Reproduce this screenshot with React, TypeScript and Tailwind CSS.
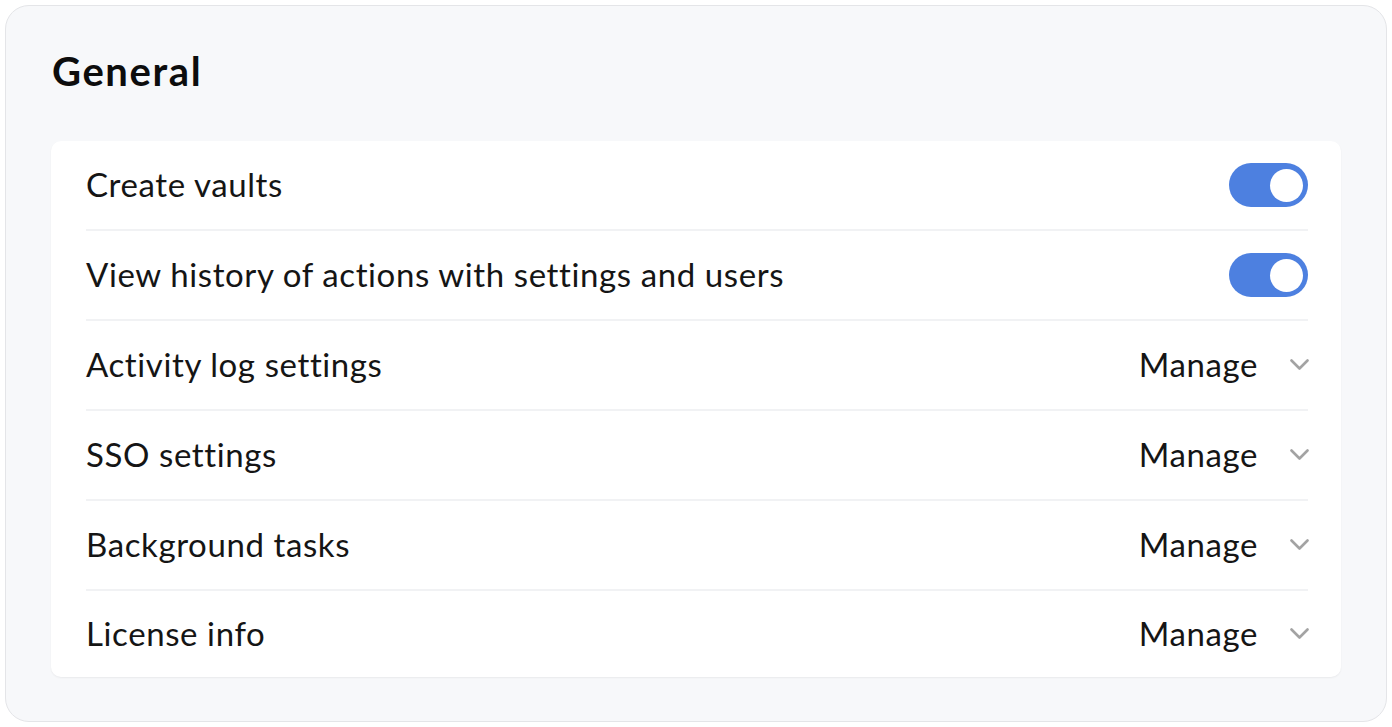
type Row = { label: string; kind: "toggle" | "manage"; h: string };

const rows: Row[] = [
  { label: "Create vaults", kind: "toggle", h: "h-[90px]" },
  { label: "View history of actions with settings and users", kind: "toggle", h: "h-[90px]" },
  { label: "Activity log settings", kind: "manage", h: "h-[90px]" },
  { label: "SSO settings", kind: "manage", h: "h-[90px]" },
  { label: "Background tasks", kind: "manage", h: "h-[90px]" },
  { label: "License info", kind: "manage", h: "h-[86px]" },
];

function Toggle() {
  return (
    <div className="flex h-[44px] w-[79px] items-center justify-end rounded-full bg-[#4d80e0] pr-[5px]">
      <div className="h-[33px] w-[33px] rounded-full bg-white" />
    </div>
  );
}

function Chevron() {
  return (
    <svg width="19" height="12" viewBox="0 0 19 12" fill="none" className="mr-[-1px]">
      <polyline
        points="1.5,1.5 9.5,9.5 17.5,1.5"
        stroke="#a3a3a3"
        strokeWidth="2.6"
        strokeLinecap="round"
        strokeLinejoin="round"
      />
    </svg>
  );
}

export default function App() {
  return (
    <div className="h-[727px] w-[1392px] bg-white p-[5px] font-['Lato',sans-serif] text-[#151515]">
      <div className="flex h-[717px] flex-col rounded-[24px] border border-[#e4e5e8] bg-[#f7f8fa] px-[45px] pt-[35px]">
        <h1 className="ml-[1px] text-[40px] font-bold leading-[60px] tracking-[1.6px] text-[#0d0d0d]">General</h1>
        <div className="mt-[40px] rounded-[10px] bg-white pl-[35px] pr-[33px] shadow-[0_1px_2px_rgba(0,0,0,0.06)]">
          {rows.map((row, i) => (
            <div
              key={row.label}
              className={
                "flex items-center justify-between " +
                row.h +
                (i < rows.length - 1 ? " border-b-2 border-[#f1f2f4]" : "")
              }
            >
              <span className="mb-[2px] text-[33px] leading-none tracking-[0.6px]">{row.label}</span>
              {row.kind === "toggle" ? (
                <Toggle />
              ) : (
                <div className="flex items-center gap-[32px]">
                  <span className="mb-[2px] text-[33px] leading-none tracking-[0.6px]">Manage</span>
                  <Chevron />
                </div>
              )}
            </div>
          ))}
        </div>
      </div>
    </div>
  );
}
